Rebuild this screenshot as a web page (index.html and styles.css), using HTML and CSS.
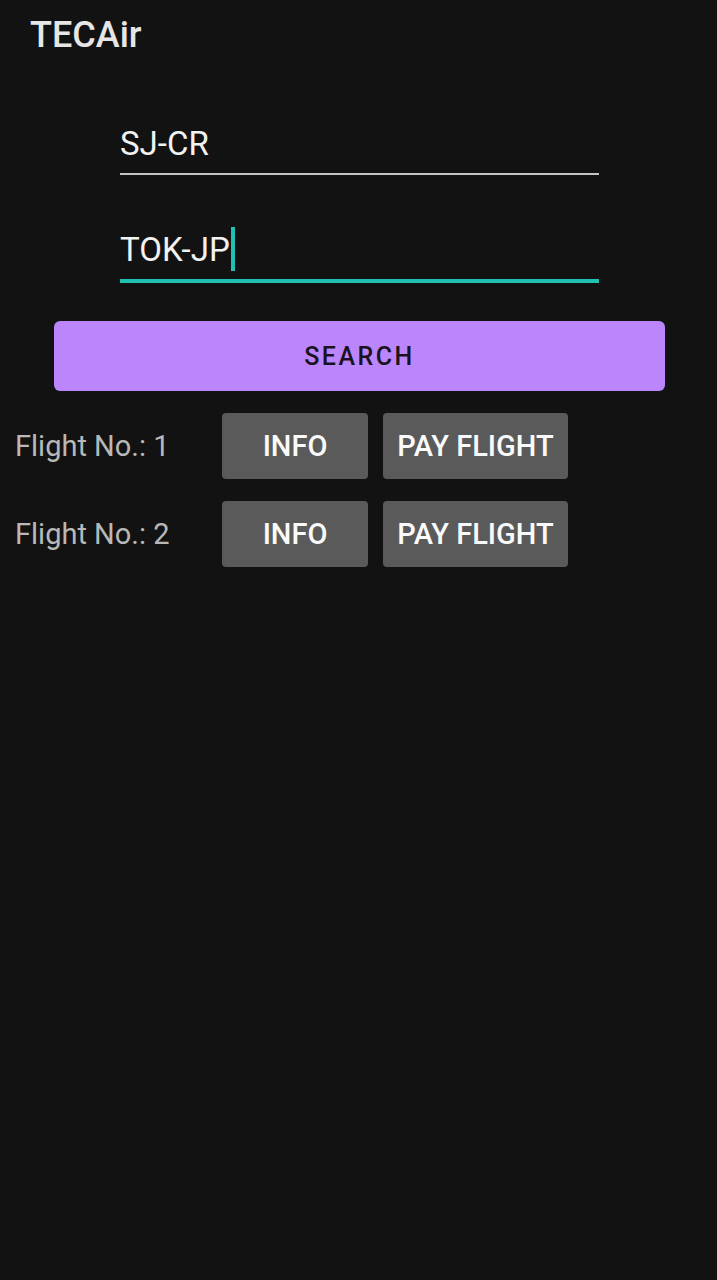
FILE: index.html
```html
<!DOCTYPE html>
<html>
<head>
<meta charset="utf-8">
<link rel="stylesheet" href="styles.css">
</head>
<body>
<div class="screen">
  <header class="toolbar"><span class="title">TECAir</span></header>
  <div class="form">
    <div class="field">SJ-CR</div>
    <div class="field focused">TOK-JP<span class="caret"></span></div>
  </div>
  <div class="search-wrap">
    <div class="search">SEARCH</div>
  </div>
  <div class="results">
    <div class="row">
      <span class="label">Flight No.: 1</span>
      <div class="btn info">INFO</div>
      <div class="btn pay">PAY FLIGHT</div>
    </div>
    <div class="row">
      <span class="label">Flight No.: 2</span>
      <div class="btn info">INFO</div>
      <div class="btn pay">PAY FLIGHT</div>
    </div>
  </div>
</div>
</body>
</html>
```
FILE: styles.css
```css
html, body {
  margin: 0;
  padding: 0;
  background: #121212;
}
body {
  font-family: Roboto, "Liberation Sans", sans-serif;
  width: 717px;
  height: 1280px;
  overflow: hidden;
}
.screen {
  display: flex;
  flex-direction: column;
}
.toolbar {
  height: 70px;
  padding-left: 30px;
  display: flex;
  align-items: center;
}
.title {
  font-size: 36px;
  font-weight: 500;
  line-height: 70px;
  color: #e6e6e6;
}
.form {
  display: flex;
  flex-direction: column;
  padding: 0 118px 0 120px;
}
.field {
  font-size: 33px;
  line-height: 36px;
  color: #f2f2f2;
  margin-top: 56px;
  padding-bottom: 11px;
  border-bottom: 2px solid #c4c4c4;
}
.field.focused {
  margin-top: 57px;
  border-bottom: 4px solid #1fc1b2;
}
.caret {
  display: inline-block;
  width: 4px;
  height: 44px;
  background: #1fc1b2;
  margin: -8px 0 -3px 1px;
  vertical-align: -7px;
}
.search-wrap {
  padding: 38px 52px 0 54px;
}
.search {
  height: 70px;
  border-radius: 6px;
  background: #bb86fc;
  color: #1a1220;
  font-size: 25px;
  font-weight: 500;
  letter-spacing: 2.5px;
  display: flex;
  align-items: center;
  justify-content: center;
}
.results {
  display: flex;
  flex-direction: column;
  gap: 22px;
  padding: 22px 0 0 15px;
}
.row {
  display: flex;
  align-items: center;
  height: 66px;
}
.label {
  width: 207px;
  font-size: 29px;
  color: #b8b8b8;
}
.btn {
  height: 66px;
  border-radius: 4px;
  background: #5a5a5b;
  color: #fafafa;
  font-size: 29px;
  font-weight: 500;
  display: flex;
  align-items: center;
  justify-content: center;
}
.info {
  width: 146px;
}
.pay {
  width: 185px;
  margin-left: 15px;
}
```
